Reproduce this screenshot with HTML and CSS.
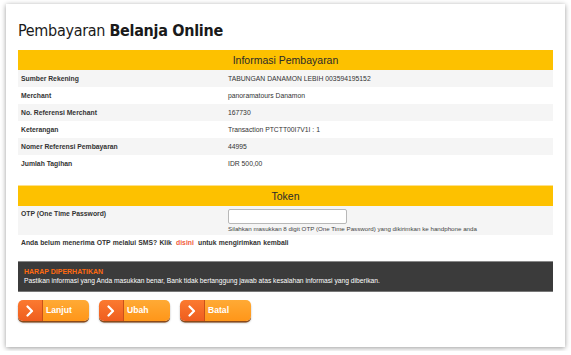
FILE: index.html
```
<!DOCTYPE html>
<html>
<head>
<meta charset="utf-8">
<link rel="stylesheet" href="styles.css">
</head>
<body>
<div class="card">
  <h1 class="title">Pembayaran <b>Belanja Online</b></h1>
  <div class="section-head">Informasi Pembayaran</div>
  <div class="rows">
    <div class="row alt"><div class="label">Sumber Rekening</div><div class="value">TABUNGAN DANAMON LEBIH 003594195152</div></div>
    <div class="row"><div class="label">Merchant</div><div class="value">panoramatours Danamon</div></div>
    <div class="row alt"><div class="label">No. Referensi Merchant</div><div class="value">167730</div></div>
    <div class="row"><div class="label">Keterangan</div><div class="value">Transaction PTCTT00I7V1I : 1</div></div>
    <div class="row alt"><div class="label">Nomer Referensi Pembayaran</div><div class="value">44995</div></div>
    <div class="row"><div class="label">Jumlah Tagihan</div><div class="value">IDR 500,00</div></div>
  </div>
  <div class="section-head token-head">Token</div>
  <div class="row alt otp-row">
    <div class="label">OTP (One Time Password)</div>
    <div class="value">
      <input class="otp-input" type="text">
      <div class="hint">Silahkan masukkan 8 digit OTP (One Time Password) yang dikirimkan ke handphone anda</div>
    </div>
  </div>
  <p class="resend">Anda belum menerima OTP melalui SMS? Klik <a class="link">disini</a> untuk mengirimkan kembali</p>
  <div class="notice">
    <div class="notice-title">HARAP DIPERHATIKAN</div>
    <div class="notice-text">Pastikan informasi yang Anda masukkan benar, Bank tidak bertanggung jawab atas kesalahan informasi yang diberikan.</div>
  </div>
  <div class="buttons">
    <div class="btn"><span class="btn-icon"><svg width="10" height="12" viewBox="0 0 10 12"><path d="M2.5 1.5 L7 6 L2.5 10.5" fill="none" stroke="#fff" stroke-width="2.2" stroke-linecap="round" stroke-linejoin="round"/></svg></span><span class="btn-text">Lanjut</span></div>
    <div class="btn"><span class="btn-icon"><svg width="10" height="12" viewBox="0 0 10 12"><path d="M2.5 1.5 L7 6 L2.5 10.5" fill="none" stroke="#fff" stroke-width="2.2" stroke-linecap="round" stroke-linejoin="round"/></svg></span><span class="btn-text">Ubah</span></div>
    <div class="btn"><span class="btn-icon"><svg width="10" height="12" viewBox="0 0 10 12"><path d="M2.5 1.5 L7 6 L2.5 10.5" fill="none" stroke="#fff" stroke-width="2.2" stroke-linecap="round" stroke-linejoin="round"/></svg></span><span class="btn-text">Batal</span></div>
  </div>
</div>
</body>
</html>
```
FILE: styles.css
```
html, body {
  margin: 0;
  padding: 0;
  background: #fff;
}
body {
  padding: 4px 6px;
  font-family: "Liberation Sans", Arial, sans-serif;
  color: #222;
}
.card {
  width: 535px;
  height: 343px;
  padding: 0 12px;
  background: #fff;
  box-shadow: 0 1px 5px rgba(0,0,0,0.4);
  box-sizing: content-box;
}
.title {
  margin: 0;
  padding-top: 16px;
  height: 30px;
  font-family: "DejaVu Sans Condensed", "DejaVu Sans", Verdana, sans-serif;
  font-stretch: condensed;
  font-size: 16px;
  font-weight: normal;
  line-height: 22px;
  letter-spacing: -0.3px;
  color: #1a1a1a;
}
.title b {
  font-weight: bold;
}
.section-head {
  height: 20px;
  line-height: 20px;
  background: #fdc100;
  text-align: center;
  font-size: 10.5px;
  color: #2a2a2a;
}
.token-head {
  margin-top: 13px;
  height: 21px;
  line-height: 21px;
  border-top: 1px solid #fde08a;
  box-sizing: border-box;
}
.row {
  display: flex;
  height: 17px;
  align-items: center;
  font-size: 6.8px;
}
.row.alt {
  background: #f5f5f5;
}
.label {
  width: 207px;
  padding-left: 3px;
  font-weight: bold;
  color: #333;
  flex: none;
}
.value {
  color: #333;
}
.otp-row {
  height: 29px;
  align-items: flex-start;
}
.otp-row .label {
  padding-top: 4px;
}
.otp-input {
  display: block;
  margin: 3px 0 0 0;
  width: 119px;
  height: 15px;
  box-sizing: border-box;
  border: 1px solid #b8b8b8;
  border-radius: 2px;
  background: #fff;
  padding: 0;
}
.hint {
  margin-top: 1px;
  font-size: 6.2px;
  color: #444;
}
.resend {
  margin: 4px 0 0 3px;
  height: 17px;
  font-size: 6.8px;
  font-weight: bold;
  color: #333;
  word-spacing: 0.3px;
}
.link {
  color: #f05a3c;
  padding: 0 2px;
}
.notice {
  margin-top: 5px;
  height: 31px;
  box-sizing: border-box;
  background: #3b3b3b;
  border-top: 1px solid #888;
  border-bottom: 1px solid #777;
  padding: 5px 0 0 6px;
}
.notice-title {
  font-size: 7px;
  font-weight: bold;
  color: #ff6a10;
  line-height: 9px;
}
.notice-text {
  font-size: 6.7px;
  color: #fff;
  line-height: 10px;
}
.buttons {
  display: flex;
  gap: 10px;
  margin-top: 8px;
}
.btn {
  display: flex;
  width: 71px;
  height: 21px;
  border-radius: 5px;
  overflow: hidden;
  box-shadow: 0 1.5px 0 #8a4a1a, 0 2px 2px rgba(0,0,0,0.3);
}
.btn-icon {
  width: 24px;
  flex: none;
  display: flex;
  align-items: center;
  justify-content: center;
  background: linear-gradient(#fb7a30, #ef5d1e);
  border-right: 1px solid #c9511a;
}
.btn-text {
  flex: 1;
  background: linear-gradient(#ffaa35, #ff9619);
  color: #fff;
  font-size: 8.6px;
  font-weight: bold;
  line-height: 20px;
  padding-left: 3px;
}
```
